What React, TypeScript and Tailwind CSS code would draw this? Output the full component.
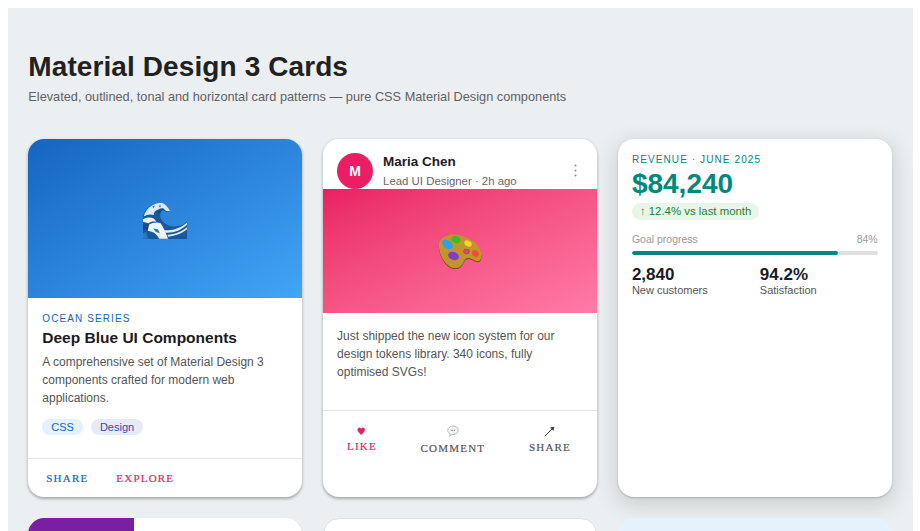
import { useState } from "react"

type Stat = { value: string, label: string }

const stats: Stat[] = [
  { value: "2,840", label: "New customers" },
  { value: "94.2%", label: "Satisfaction" },
]

function WaveEmoji() {
  return (
    <svg width="44" height="37" viewBox="0 0 130 108" className="mt-1">
      <path d="M0 108V40C5 22 25 3 50 2c12-2 22 10 30 24l-12 2-10-6c-6 4-8 14-6 24 6 16 24 26 44 26 15-2 26-6 34-14v52z" fill="#17589f" />
      <path d="M2 42C8 20 28 3 50 2c12-2 22 10 30 24H68l-8-8c-8-2-14 2-20 6-6 2-8 8-8 14-10-4-20-2-30 4z" fill="#dbe9f1" />
      <path d="M28 12l8-2-6 8zM46 10l8 0-4 6z" fill="#2f78ba" />
      <path d="M0 50c10-6 22-6 32-2l8 10c-10-2-18 0-24 4L0 58z" fill="#e9f2f6" />
      <path d="M0 68c8-4 16-4 22-2l-4 14-18 2z" fill="#0f4a8a" />
      <path d="M18 66c10-6 24-8 34-4 8 12 16 28 22 46H48C42 96 32 86 14 84z" fill="#eef5f8" />
      <path d="M30 78l14 2 6 12-12-4zM0 92l10-4 4 20H0z" fill="#2f78ba" />
      <path d="M62 82c24 4 50-6 68-22v6C112 84 90 92 66 90z" fill="#dbe9f1" />
      <path d="M72 96c22 0 42-10 58-22v6c-14 12-34 20-56 22z" fill="#dbe9f1" />
      <path d="M42 26c6-4 12-6 18-4l-8 6-6 6z" fill="#0f4a8a" />
    </svg>
  )
}

function PaletteEmoji() {
  return (
    <svg width="44" height="35" viewBox="0 0 44 35">
      <path d="M1 9C3 3 11-1 20 1c9 2 18 6 22 14 2 5 2 11-1 12-4 1-7-3-11-3-4 0-4 5-7 8-3 3-8 3-12 0C5 28 0 18 1 9z" fill="#6f4f18" transform="translate(0 1)" />
      <path d="M1 9C3 3 11-1 20 1c9 2 18 6 22 14 2 5 2 11-1 12-4 1-7-3-11-3-4 0-4 5-7 8-3 3-8 3-12 0C5 28 0 18 1 9z" fill="#c4932c" />
      <ellipse cx="9.500" cy="10.500" rx="6" ry="4" fill="#2f9fe6" transform="rotate(35 9.500 10.500)" />
      <ellipse cx="18" cy="5.500" rx="4.500" ry="3.500" fill="#3dbb1f" transform="rotate(20 18 5.500)" />
      <ellipse cx="30" cy="9.500" rx="4" ry="2.800" fill="#f3d62e" transform="rotate(30 30 9.500)" />
      <ellipse cx="15.500" cy="22" rx="5.500" ry="4" fill="#7d3fc4" transform="rotate(20 15.500 22)" />
      <ellipse cx="37.500" cy="19.500" rx="3.800" ry="3" fill="#e8503a" transform="rotate(40 37.500 19.500)" />
      <ellipse cx="28.500" cy="17.500" rx="3" ry="2.300" fill="#e0437e" stroke="#6f4f18" strokeWidth=".5" />
    </svg>
  )
}

function BubbleEmoji() {
  return (
    <svg width="12" height="13" viewBox="0 0 12 13">
      <path d="M6 1c3 0 5.300 1.800 5.300 4.300S9 9.600 6 9.600c-.5 0-1 0-1.400-.1L2.800 11.500l.2-2.700C1.500 8 .7 6.800.7 5.300.7 2.800 3 1 6 1z" fill="#f2f3f3" stroke="#a9b0b3" strokeWidth=".8" />
      <path d="M3.700 5.300h4.600" stroke="#8a9296" strokeWidth="1.200" strokeDasharray="1 .6" />
    </svg>
  )
}

function ArrowEmoji() {
  return (
    <svg width="11" height="11" viewBox="0 0 11 11">
      <path d="M.8 10.200 8.500 2.500" stroke="#3a3a3a" strokeWidth="1" />
      <path d="M10.300.7 9.400 5 6 1.600z" fill="#3a3a3a" />
    </svg>
  )
}

function ArticleCard() {
  return (
    <div className="bg-white rounded-2xl overflow-hidden shadow-[0_2px_3px_rgba(0,0,0,0.22),0_1px_3px_1px_rgba(0,0,0,0.08)] flex flex-col">
      <div className="h-[159px] flex items-center justify-center bg-linear-to-br from-[#1565c0] to-[#42a5f5]">
        <WaveEmoji />
      </div>
      <div className="px-3.5 pt-3.5 pb-3 flex-1">
        <div className="text-[10px] leading-[13px] tracking-[1.1px] text-[#1565c0]">OCEAN SERIES</div>
        <h2 className="mt-[3px] text-[15.500px] leading-[20px] font-bold text-[#1c1b1f]">Deep Blue UI Components</h2>
        <p className="mt-[5px] text-[12px] leading-[18px] text-[#555]">A comprehensive set of Material Design 3 components crafted for modern web applications.</p>
        <div className="mt-3 flex gap-2">
          <span className="px-[9px] h-4 flex items-center rounded-full text-[11px] bg-[#e3f2fd] text-[#1565c0]">CSS</span>
          <span className="px-[9px] h-4 flex items-center rounded-full text-[11px] bg-[#e8eaf6] text-[#3949ab]">Design</span>
        </div>
      </div>
      <div className="border-t border-[#e6e6e6] h-[39px] pl-[18px] flex items-center gap-7 font-['Liberation_Serif',serif] text-[11px] tracking-[1.2px] [-webkit-text-stroke:0.2px]">
        <button className="text-[#1565c0]">SHARE</button>
        <button className="text-[#e91e63]">EXPLORE</button>
      </div>
    </div>
  )
}

function PostCard() {
  const [liked, setLiked] = useState(true)

  return (
    <div className="bg-white rounded-2xl overflow-hidden shadow-[0_2px_3px_rgba(0,0,0,0.22),0_1px_3px_1px_rgba(0,0,0,0.08)] flex flex-col">
      <div className="pl-3.5 pr-[20px] pt-3.5 flex items-center gap-2.5">
        <div className="w-[36px] h-[36px] rounded-full bg-[#e91e63] text-white font-bold text-[14px] flex items-center justify-center">M</div>
        <div className="flex-1 min-w-0">
          <div className="text-[13.500px] leading-[16px] font-bold text-[#1c1b1f]">Maria Chen</div>
          <div className="mt-[4px] text-[11.400px] leading-[14px] text-[#666]">Lead UI Designer · 2h ago</div>
        </div>
        <svg width="3" height="13" viewBox="0 0 3 13" className="mb-[1px]" fill="#8a8a8a">
          <circle cx="1.500" cy="1.500" r="1" />
          <circle cx="1.500" cy="6.500" r="1" />
          <circle cx="1.500" cy="11.500" r="1" />
        </svg>
      </div>
      <div className="h-[124px] flex items-center justify-center bg-linear-to-br from-[#e91e63] to-[#ff7aa8]">
        <PaletteEmoji />
      </div>
      <p className="px-3.5 pt-3.5 pb-[29px] text-[12px] leading-[18px] text-[#555]">Just shipped the new icon system for our design tokens library. 340 icons, fully optimised SVGs!</p>
      <div className="border-t border-[#e6e6e6] pt-[12px] flex items-start justify-around pl-[2px] pr-[4px] font-['Liberation_Serif',serif] text-[11px] tracking-[1.2px] [-webkit-text-stroke:0.2px]">
        <button onClick={() => setLiked(prev => !prev)} className="flex flex-col items-center text-[#e91e63]">
          <span className="h-[17px] text-[10px] leading-[17px] font-['DejaVu_Sans',sans-serif]">♥</span>
          <span className="leading-[13px]">LIKE</span>
        </button>
        <button className="flex flex-col items-center text-[#555]">
          <span className="h-[17px] flex items-center"><BubbleEmoji /></span>
          <span className="leading-[13px] mt-[2px]">COMMENT</span>
        </button>
        <button className="flex flex-col items-center text-[#555]">
          <span className="h-[16px] flex items-center"><ArrowEmoji /></span>
          <span className="leading-[13px] mt-[2px]">SHARE</span>
        </button>
      </div>
    </div>
  )
}

function RevenueCard() {
  return (
    <div className="bg-white rounded-2xl overflow-hidden shadow-[0_1px_2px_rgba(0,0,0,0.2),0_6px_20px_4px_rgba(0,0,0,0.12)] p-3.5">
      <div className="text-[10px] leading-[13px] tracking-[1.1px] text-[#00897b]">REVENUE · JUNE 2025</div>
      <div className="mt-1 text-[28px] leading-[28px] font-bold text-[#00897b]">$84,240</div>
      <div className="inline-flex items-center h-[17px] px-2 rounded-full bg-[#e8f5e9] text-[11.400px] text-[#2e7d32]">↑ 12.4% vs last month</div>
      <div className="mt-[11px] flex justify-between text-[10.500px] leading-[13px] text-[#999]">
        <span>Goal progress</span>
        <span>84%</span>
      </div>
      <div className="mt-[5px] h-1 rounded-full bg-[#e0e0e0] overflow-hidden">
        <div className="h-full rounded-full bg-[#00897b]" style={{ width: "84%" }} />
      </div>
      <div className="mt-[11px] grid grid-cols-2 gap-2.5">
        {stats.map((s) => (
          <div key={s.label}>
            <div className="text-[17px] leading-[18px] font-bold text-[#1c1b1f]">{s.value}</div>
            <div className="text-[11px] leading-[12px] text-[#555]">{s.label}</div>
          </div>
        ))}
      </div>
    </div>
  )
}

export default function App() {
  return (
    <div className="h-screen overflow-hidden bg-white pt-[7.500px] px-[7.500px] font-['Liberation_Sans',Arial,sans-serif]">
      <div className="h-full bg-[#eceff1] px-[20.800px] pt-[41px]">
        <h1 className="text-[28px] leading-[36px] tracking-[0.1px] font-bold text-[#212121]">Material Design 3 Cards</h1>
        <p className="mt-[4.500px] text-[12.760px] leading-[16px] text-[#616161]">Elevated, outlined, tonal and horizontal card patterns — pure CSS Material Design components</p>
        <div className="mt-[34px] grid grid-cols-3 gap-[21px]">
          <div className="grid h-[358px]"><ArticleCard /></div>
          <div className="grid h-[358px]"><PostCard /></div>
          <div className="grid h-[358px]"><RevenueCard /></div>
          <div className="bg-white rounded-2xl overflow-hidden h-24 flex shadow-[0_1px_2px_rgba(0,0,0,0.2)]">
            <div className="w-[106px] bg-[#7b1fa2]" />
          </div>
          <div className="bg-white rounded-2xl h-24 border border-[#e0e0e0]" />
          <div className="bg-[#e3f2fd] rounded-2xl h-24" />
        </div>
      </div>
    </div>
  )
}
